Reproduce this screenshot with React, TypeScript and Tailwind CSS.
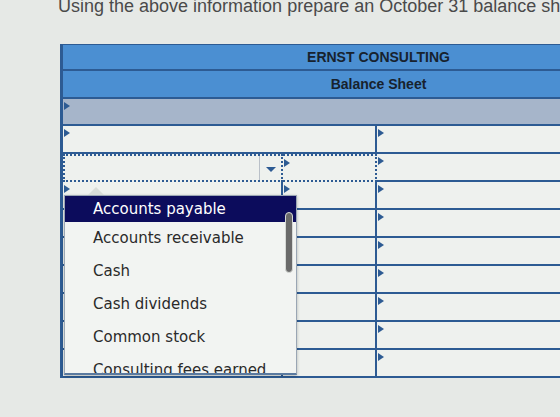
import React from 'react';

const LINE = 'border-[#2d5b93]';

// small right-pointing marker shown in the corner of each input cell
const Marker = () => (
  <span className="absolute left-[1px] top-[3px] w-0 h-0 border-y-[4px] border-y-transparent border-l-[6px] border-l-[#2d5b93]" />
);

const accounts = [
  'Accounts receivable',
  'Cash',
  'Cash dividends',
  'Common stock',
  'Consulting fees earned',
];

type RowKind = 'merged' | 'select' | 'plain';

const rows: RowKind[] = ['merged', 'select', 'plain', 'plain', 'plain', 'plain', 'plain', 'plain', 'plain'];

const SheetRow: React.FC<{ kind: RowKind }> = ({ kind }) => {
  if (kind === 'merged') {
    return (
      <div className="grid grid-cols-[314px_1fr] h-[28px]">
        <div className={`relative border-b-2 border-r-2 ${LINE} bg-[#eef1ee]`}>
          <Marker />
        </div>
        <div className={`relative border-b-2 ${LINE} bg-[#eef1ee]`}>
          <Marker />
        </div>
      </div>
    );
  }
  if (kind === 'select') {
    return (
      <div className="grid grid-cols-[220px_94px_1fr] h-[28px]">
        <div className="relative border-2 border-dotted border-[#2d5b93] bg-[#eef1ee] flex justify-end">
          <div className="w-[22px] border-l border-[#b9c0c8] flex items-center justify-center">
            <span className="w-0 h-0 border-x-[5px] border-x-transparent border-t-[5px] border-t-[#2d5b93] mt-[2px]" />
          </div>
        </div>
        <div className="relative border-t-2 border-dotted border-t-[#2d5b93] border-r-2 border-r-[#2d5b93] border-b-2 border-b-[#2d5b93] bg-[#eef1ee]">
          <Marker />
        </div>
        <div className={`relative border-b-2 ${LINE} bg-[#eef1ee]`}>
          <Marker />
        </div>
      </div>
    );
  }
  return (
    <div className="grid grid-cols-[220px_94px_1fr] h-[28px]">
      <div className={`relative border-b-2 border-r-2 ${LINE} bg-[#eef1ee]`}>
        <Marker />
      </div>
      <div className={`relative border-b-2 border-r-2 ${LINE} bg-[#eef1ee]`}>
        <Marker />
      </div>
      <div className={`relative border-b-2 ${LINE} bg-[#eef1ee]`}>
        <Marker />
      </div>
    </div>
  );
};

export default function App() {
  return (
    <div
      className="relative w-[560px] h-[417px] overflow-hidden bg-[#e6e9e6]"
      style={{ fontFamily: '"Liberation Sans", Arial, sans-serif' }}
    >
      <div className="h-[44px] flex items-start">
        <p className="ml-[58px] -mt-[4px] text-[18px] leading-[20px] text-[#4a4a4a] whitespace-nowrap">
          Using the above information prepare an October 31 balance sheet.
        </p>
      </div>

      <div className={`ml-[60px] w-[634px] border-l-[3px] ${LINE}`}>
        <div className={`h-[27px] bg-[#4b8fd2] border-t border-b-2 ${LINE} flex items-center justify-center font-bold text-[14px] text-[#17222e]`}>
          ERNST CONSULTING
        </div>
        <div className={`h-[28px] bg-[#4b8fd2] border-b-2 ${LINE} flex items-center justify-center font-bold text-[14px] text-[#17222e]`}>
          Balance Sheet
        </div>
        <div className={`relative h-[27px] bg-[#a6b5ca] border-b-2 ${LINE}`}>
          <Marker />
        </div>
        {rows.map((kind, i) => (
          <SheetRow key={i} kind={kind} />
        ))}
      </div>

      {/* open account picker */}
      <div
        className="absolute left-[64px] top-[195px] w-[233px] h-[180px] bg-[#f2f4f2] border border-[#9aa6b4] border-b-2 border-b-[#5a7aa0] shadow-[0_1px_3px_rgba(0,0,0,0.25)] overflow-hidden"
        style={{ fontFamily: '"DejaVu Sans", Verdana, sans-serif' }}
      >
        <div className="h-[26px] bg-[#0c0c5c] text-white text-[15px] flex items-center pl-[28px]">
          Accounts payable
        </div>
        {accounts.map((name) => (
          <div key={name} className="h-[33px] text-[15px] text-[#2a2a2a] flex items-center pl-[28px] whitespace-nowrap">
            {name}
          </div>
        ))}
        <div className="absolute right-[3px] top-[16px] w-[8px] h-[61px] rounded-full bg-[#6a6a6a] border border-[#d5d8d5]" />
      </div>
      {/* notch above the picker */}
      <span className="absolute left-[88px] top-[187px] w-0 h-0 border-x-[8px] border-x-transparent border-b-[8px] border-b-[#d8dcd8]" />
    </div>
  );
}
